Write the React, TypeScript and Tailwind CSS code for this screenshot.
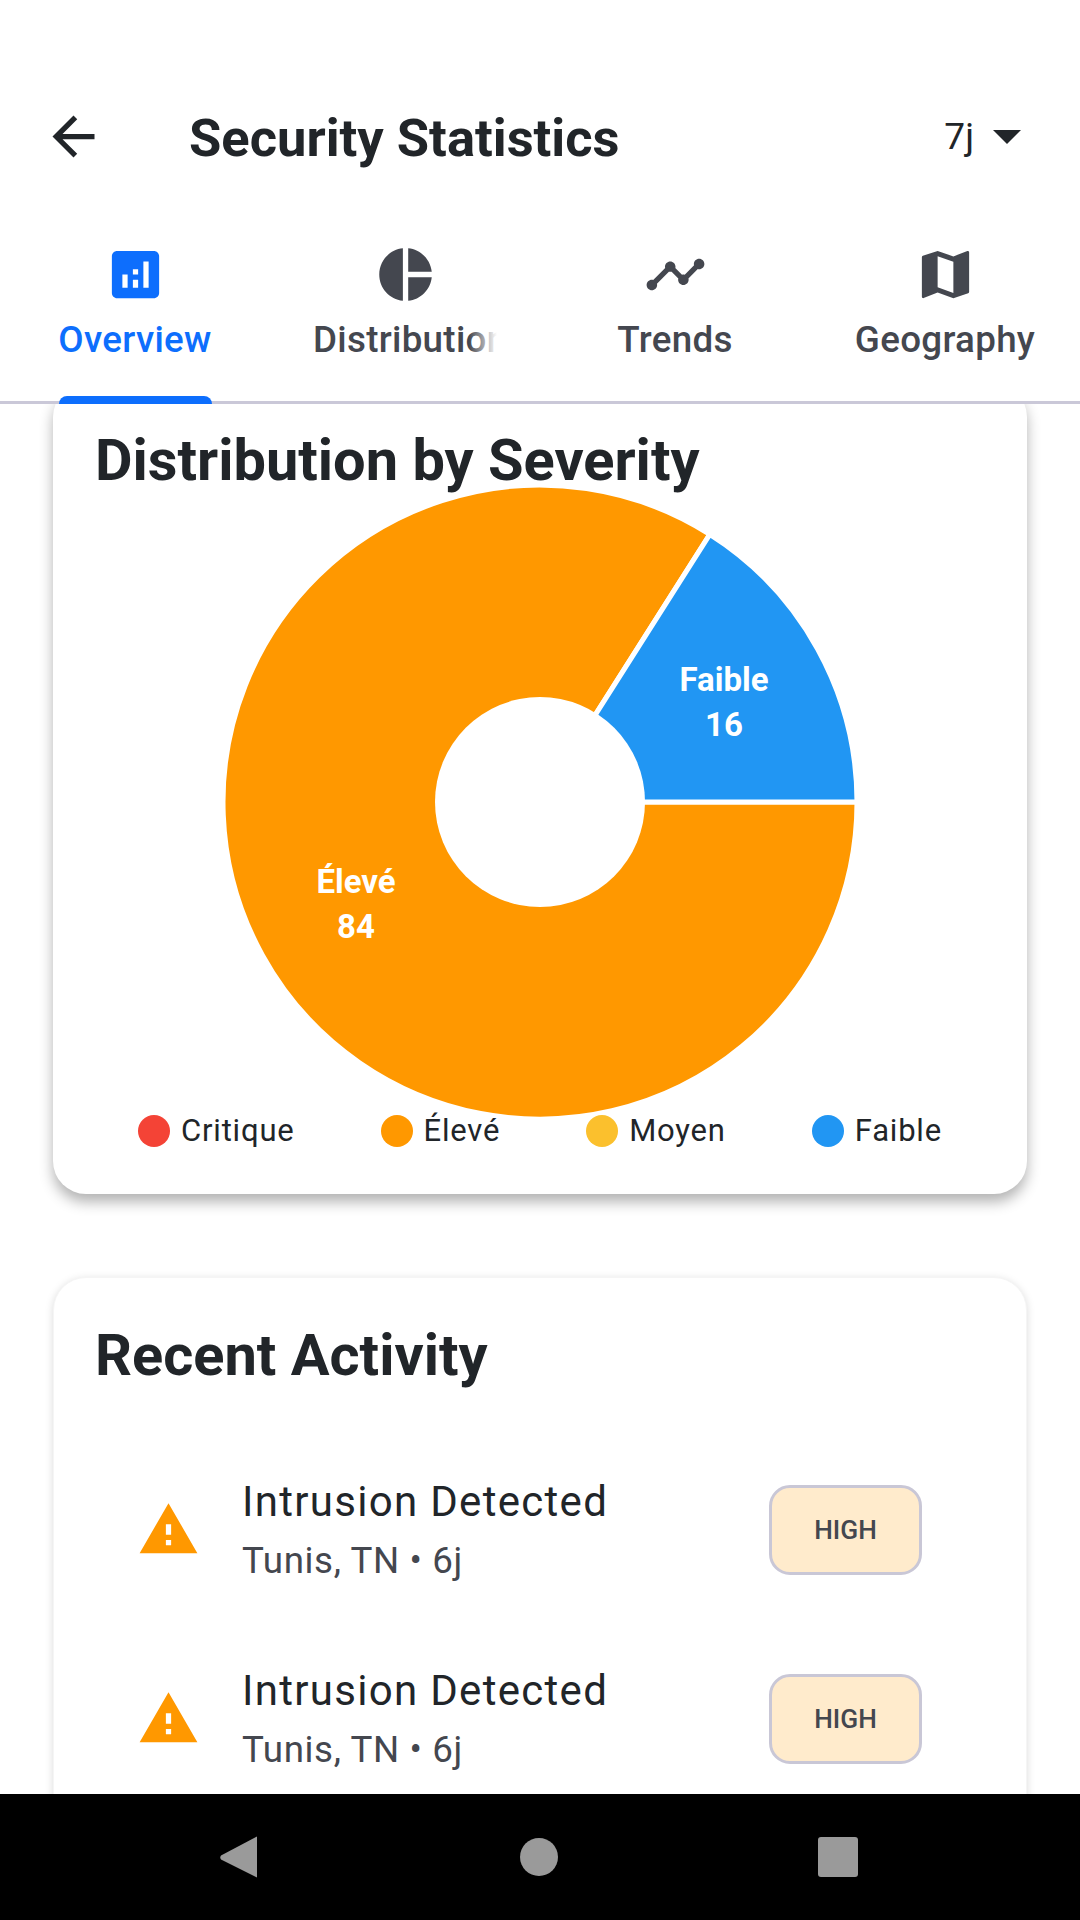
import React from 'react';

const icons = {
  analytics: 'M19 3H5c-1.1 0-2 .9-2 2v14c0 1.1.9 2 2 2h14c1.1 0 2-.9 2-2V5c0-1.1-.9-2-2-2zM9 17H7v-5h2v5zm4 0h-2v-3h2v3zm0-5h-2v-2h2v2zm4 5h-2V7h2v10z',
  pie: 'M11 2v20c-5.07-.5-9-4.79-9-10s3.93-9.5 9-10zm2.03 0v8.99H22c-.47-4.74-4.24-8.52-8.97-8.99zm0 11.01V22c4.74-.47 8.5-4.25 8.97-8.99h-8.97z',
  timeline: 'M23 8c0 1.1-.9 2-2 2-.18 0-.35-.02-.51-.07l-3.56 3.55c.05.16.07.34.07.52 0 1.1-.9 2-2 2s-2-.9-2-2c0-.18.02-.36.07-.52l-2.55-2.55c-.16.05-.34.07-.52.07s-.36-.02-.52-.07l-4.55 4.56c.05.16.07.33.07.51 0 1.1-.9 2-2 2s-2-.9-2-2 .9-2 2-2c.18 0 .35.02.51.07l4.56-4.55C8.02 9.36 8 9.18 8 9c0-1.1.9-2 2-2s2 .9 2 2c0 .18-.02.36-.07.52l2.55 2.55c.16-.05.34-.07.52-.07s.36.02.52.07l3.55-3.56C19.02 8.35 19 8.18 19 8c0-1.1.9-2 2-2s2 .9 2 2z',
  map: 'M20.5 3l-.16.03L15 5.1 9 3 3.36 4.9c-.21.07-.36.25-.36.48V20.5c0 .28.22.5.5.5l.16-.03L9 18.9l6 2.1 5.64-1.9c.21-.07.36-.25.36-.48V3.5c0-.28-.22-.5-.5-.5zM15 19l-6-2.11V5l6 2.11V19z',
  warning: 'M1 21h22L12 2 1 21zm12-3h-2v-2h2v2zm0-4h-2v-4h2v4z',
  back: 'M20 11H7.83l5.59-5.59L12 4l-8 8 8 8 1.41-1.41L7.83 13H20v-2z',
};

function Icon({ d, className }: { d: string; className: string }) {
  return (
    <svg viewBox="0 0 24 24" className={className} fill="currentColor">
      <path d={d} />
    </svg>
  );
}

const tabs = [
  { label: 'Overview', icon: icons.analytics, active: true },
  { label: 'Distribution', icon: icons.pie, clipped: true },
  { label: 'Trends', icon: icons.timeline },
  { label: 'Geography', icon: icons.map },
];

const legend = [
  { label: 'Critique', color: 'bg-[#f44336]' },
  { label: 'Élevé', color: 'bg-[#ff9800]' },
  { label: 'Moyen', color: 'bg-[#fbc02d]' },
  { label: 'Faible', color: 'bg-[#2196f3]' },
];

function PieChart() {
  return (
    <svg viewBox="0 0 640 640" className="w-[640px] h-[640px] mx-auto block">
      <path
        d="M320 320 L637 320 A317 317 0 1 1 489.8 52.4 Z"
        fill="#ff9800"
        stroke="#ffffff"
        strokeWidth="5"
      />
      <path
        d="M320 320 L489.8 52.4 A317 317 0 0 1 637 320 Z"
        fill="#2196f3"
        stroke="#ffffff"
        strokeWidth="5"
      />
      <circle cx="320" cy="320" r="105" fill="#ffffff" />
      <g fill="#ffffff" fontSize="33" fontWeight="700" textAnchor="middle" fontFamily="Roboto, sans-serif">
        <text x="504" y="209">Faible</text>
        <text x="504" y="254">16</text>
        <text x="136" y="411">Élevé</text>
        <text x="136" y="456">84</text>
      </g>
    </svg>
  );
}

function ActivityRow() {
  return (
    <div className="h-[189px] flex items-center pl-[83px] pr-[104px]">
      <Icon d={icons.warning} className="w-[63px] h-[63px] text-[#ff9800] shrink-0" />
      <div className="ml-[42px] flex-1 mt-[1px]">
        <div className="text-[42px] leading-[56px] tracking-[1.3px] text-[#212529]">Intrusion Detected</div>
        <div className="text-[36.75px] leading-[50px] mt-[6px] tracking-[0.6px] text-[#44474f]">Tunis, TN • 6j</div>
      </div>
      <div className="w-[153px] h-[90px] pt-[3px] rounded-[21px] border-[3px] border-[#c9c7d6] bg-[#ffebcc] flex items-center justify-center text-[26.25px] font-medium text-[#44474f]">
        HIGH
      </div>
    </div>
  );
}

export default function App() {
  return (
    <div className="w-[1080px] h-[1920px] flex flex-col overflow-hidden bg-white font-['Roboto',sans-serif]">
      {/* app bar */}
      <div className="h-[210px] pt-[63px] shrink-0">
        <div className="h-[147px] flex items-center pl-[42px] pr-[59px]">
          <Icon d={icons.back} className="w-[63px] h-[63px] text-[#212529]" />
          <h1 className="ml-[84px] mt-[3px] text-[52.5px] font-bold text-[#212529] flex-1">Security Statistics</h1>
          <span className="text-[37px] text-[#212529]">7j</span>
          <svg viewBox="0 0 28 14" className="w-[28px] h-[14px] ml-[19px] mt-[1px]" fill="#212529">
            <path d="M0 0h28L14 14z" />
          </svg>
        </div>
      </div>

      {/* tabs */}
      <div className="relative z-10 h-[194px] shrink-0 bg-white border-b-[3px] border-[#cac8d8] grid grid-cols-4">
        {tabs.map((tab) => (
          <div key={tab.label} className="relative flex flex-col items-center pt-[33px]">
            <Icon d={tab.icon} className={`w-[63px] h-[63px] ${tab.active ? 'text-[#0d6efd]' : 'text-[#44474f]'}`} />
            <div className={`relative mt-[12px] text-[36.75px] leading-[44px] tracking-[0.3px] font-medium whitespace-nowrap ${tab.active ? 'text-[#0d6efd]' : 'text-[#44474f]'} ${tab.clipped ? 'w-[184px] overflow-hidden' : ''}`}>
              {tab.label}
              {tab.clipped && <div className="absolute right-0 top-0 bottom-0 w-[28px] bg-gradient-to-r from-transparent to-white" />}
            </div>
            {tab.active && <div className="absolute -bottom-[3px] left-[59px] w-[153px] h-[8px] rounded-t-[8px] bg-[#0d6efd]" />}
          </div>
        ))}
      </div>

      {/* scrolled content */}
      <div className="flex-1 overflow-hidden px-[53px] -mt-[20px]">
        <div className="bg-white rounded-[33px] shadow-[0_8px_14px_rgba(0,0,0,0.3)] px-[42px] pt-[42px] h-[810px]">
          <h2 className="text-[57.75px] leading-[70px] font-bold text-[#212529] -mt-[1px]">Distribution by Severity</h2>
          <div className="-mt-[13px]">
            <PieChart />
          </div>
          <div className="flex justify-center gap-[86px] -mt-[11px]">
            {legend.map((item) => (
              <div key={item.label} className="flex items-center gap-[11px]">
                <span className={`w-[32px] h-[32px] rounded-full ${item.color}`} />
                <span className="text-[31px] leading-[40px] tracking-[0.8px] text-[#212529]">{item.label}</span>
              </div>
            ))}
          </div>
        </div>

        <div className="mt-[83px] bg-white rounded-[33px] border border-[#f5f5f5] shadow-[0_2px_8px_rgba(0,0,0,0.15)] pt-[42px] pb-[200px]">
          <h2 className="px-[41px] text-[57.75px] leading-[70px] font-bold text-[#212529]">Recent Activity</h2>
          <div className="mt-[45px]">
            <ActivityRow />
            <ActivityRow />
          </div>
        </div>
      </div>

      {/* android nav bar */}
      <div className="relative z-10 h-[126px] shrink-0 bg-black flex items-center">
        <div className="w-full flex justify-between pl-[219px] pr-[222px] items-center">
          <svg viewBox="0 0 40 44" className="w-[40px] h-[44px]" fill="#9a9a9a">
            <path d="M38 1.5V42.5L2 24.5c-1-1-1-3 0-4z" />
          </svg>
          <span className="w-[38px] h-[38px] rounded-full bg-[#9a9a9a]" />
          <span className="w-[40px] h-[40px] rounded-[3px] bg-[#9a9a9a]" />
        </div>
      </div>
    </div>
  );
}
